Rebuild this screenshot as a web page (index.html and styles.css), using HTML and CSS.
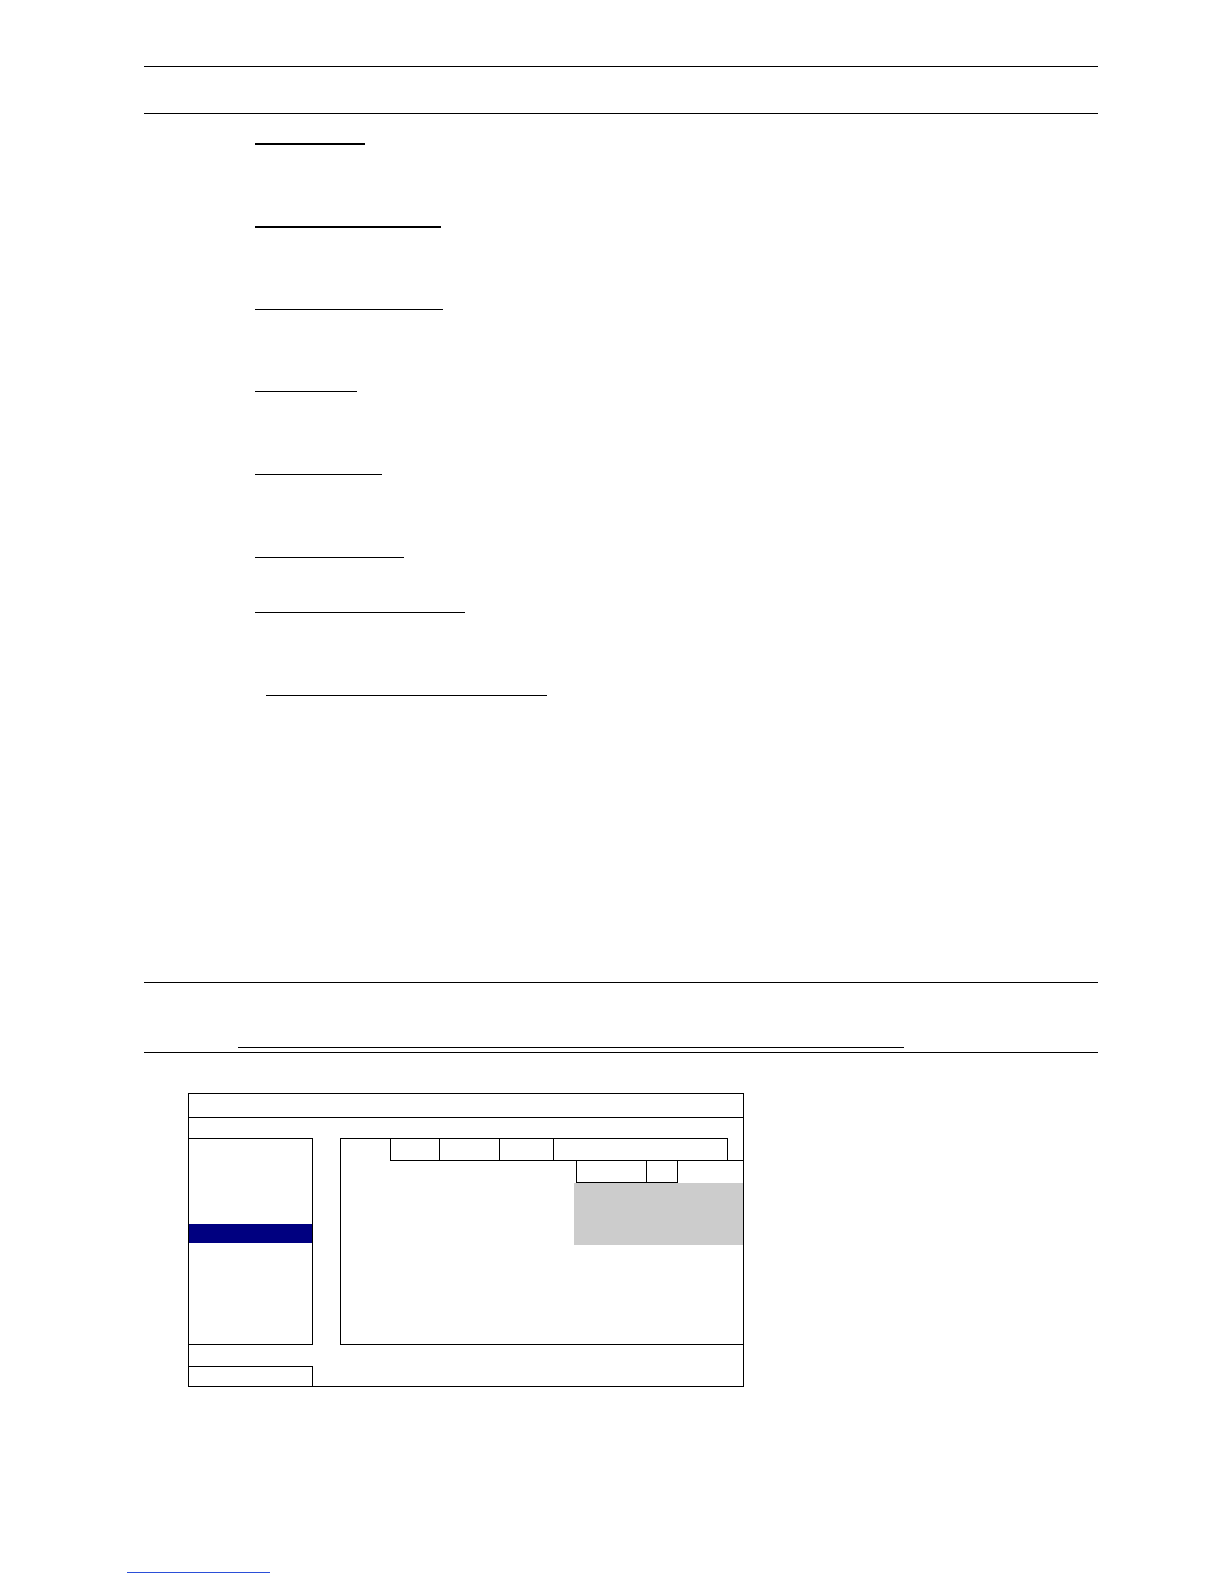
FILE: index.html
```html
<!DOCTYPE html>
<html lang="en">
<head>
<meta charset="utf-8">
<title>Manual page</title>
<link rel="stylesheet" href="styles.css">
</head>
<body>
<div class="page">
  <div class="rule rule-top"></div>
  <div class="rule rule-sub"></div>

  <div class="uline ul1 thick"></div>
  <div class="uline ul2 thick"></div>
  <div class="uline ul3"></div>
  <div class="uline ul4"></div>
  <div class="uline ul5"></div>
  <div class="uline ul6"></div>
  <div class="uline ul7"></div>
  <div class="uline ul8"></div>

  <div class="rule rule-sec"></div>
  <div class="uline ul9"></div>
  <div class="rule rule-sec2"></div>

  <div class="dialog">
    <div class="titlebar"></div>
    <div class="dbody">
      <div class="menu">
        <div class="menu-sel"></div>
      </div>
      <div class="content">
        <div class="tabrow">
          <div class="lead"></div>
          <div class="tabs">
            <div class="tab t1"></div>
            <div class="tab t2"></div>
            <div class="tab t3"></div>
            <div class="tab t4"></div>
          </div>
        </div>
        <div class="subtabs">
          <div class="subtab s1"></div>
          <div class="subtab s2"></div>
        </div>
        <div class="graybox"></div>
      </div>
    </div>
    <div class="dfoot">
      <div class="footbox"></div>
    </div>
  </div>

  <div class="linkline"></div>
</div>
</body>
</html>
```

FILE: styles.css
```css
html, body {
  margin: 0;
  padding: 0;
  background: #ffffff;
  font-family: "Liberation Serif", "Times New Roman", serif;
}

.page {
  width: 1224px;
  min-height: 1584px;
  padding-top: 66px;
  box-sizing: border-box;
}

.rule {
  margin-left: 144px;
  width: 954px;
  height: 0;
  border-top: 1px solid #000;
}

.rule-sub { margin-top: 46px; }
.rule-sec { margin-top: 286px; }
.rule-sec2 { margin-top: 4px; }

.uline {
  margin-left: 255px;
  height: 0;
  border-top: 1px solid #000;
}
.uline.thick { border-top-width: 2px; }

.ul1 { margin-top: 29px; width: 110px; }
.ul2 { margin-top: 81px; width: 186px; }
.ul3 { margin-top: 81px; width: 188px; }
.ul4 { margin-top: 81px; width: 102px; }
.ul5 { margin-top: 82px; width: 127px; }
.ul6 { margin-top: 82px; width: 149px; }
.ul7 { margin-top: 54px; width: 210px; }
.ul8 { margin-top: 82px; margin-left: 266px; width: 281px; }
.ul9 { margin-top: 64px; margin-left: 238px; width: 666px; }

.dialog {
  margin-top: 40px;
  margin-left: 188px;
  width: 556px;
  box-sizing: border-box;
  border: 1px solid #000;
}

.titlebar {
  height: 24px;
  box-sizing: border-box;
  border-bottom: 1px solid #000;
}

.dbody {
  display: flex;
  padding-top: 20px;
}

.menu {
  width: 124px;
  height: 207px;
  box-sizing: border-box;
  border-top: 1px solid #000;
  border-right: 1px solid #000;
  border-bottom: 1px solid #000;
  padding-top: 85px;
}

.menu-sel {
  height: 19px;
  background: #000080;
}

.content {
  flex: 1;
  margin-left: 27px;
  height: 207px;
  box-sizing: border-box;
  border-left: 1px solid #000;
  border-bottom: 1px solid #000;
}

.tabrow {
  display: flex;
  height: 23px;
}

.lead {
  width: 49px;
  box-sizing: border-box;
  border-top: 1px solid #000;
}

.tabs {
  flex: 1;
  display: flex;
  box-sizing: border-box;
  border-bottom: 1px solid #000;
}

.tab {
  box-sizing: border-box;
  border-top: 1px solid #000;
  border-left: 1px solid #000;
}
.t1 { width: 49px; }
.t2 { width: 60px; }
.t3 { width: 54px; }
.t4 { width: 175px; border-right: 1px solid #000; }

.subtabs {
  display: flex;
  margin-left: 235px;
  height: 22px;
}

.subtab {
  box-sizing: border-box;
  border-left: 1px solid #000;
  border-bottom: 1px solid #000;
}
.s1 { width: 70px; }
.s2 { width: 32px; border-right: 1px solid #000; }

.graybox {
  margin-left: 233px;
  height: 62px;
  background: #cccccc;
}

.dfoot {
  height: 41px;
  padding-top: 21px;
  box-sizing: border-box;
}

.footbox {
  width: 124px;
  height: 20px;
  box-sizing: border-box;
  border-top: 1px solid #000;
  border-right: 1px solid #000;
}

.linkline {
  margin-top: 185px;
  margin-left: 127px;
  width: 143px;
  height: 0;
  border-top: 1px solid #2b4fd8;
}
```
